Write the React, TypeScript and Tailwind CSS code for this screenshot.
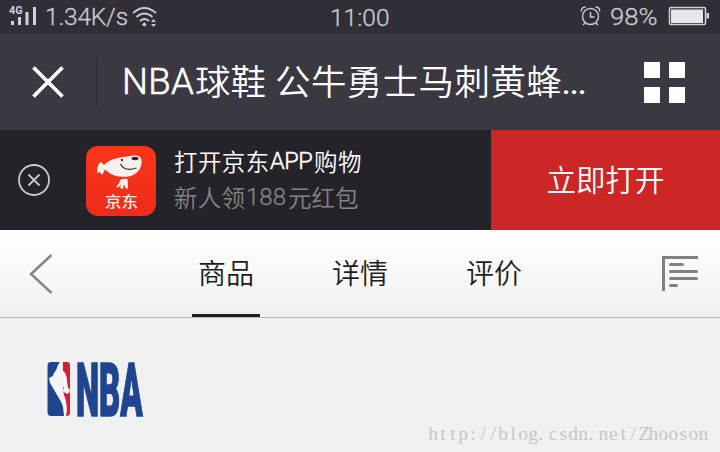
import React from 'react';

const cjk = "font-['Noto_Sans_CJK_SC',sans-serif]";

function StatusBar() {
  return (
    <div className="flex h-[34px] items-center bg-[#302e37] text-[#cbc9d0] font-['Roboto','Noto_Sans',sans-serif] [-webkit-text-stroke:0.3px_#cbc9d0]">
      <svg className="ml-2 h-[34px] w-[32px]" viewBox="8 0 32 34" fill="#d4d2d9">
        <text x="9" y="14" fontSize="10" fontWeight="700" fontFamily="Roboto, sans-serif" textLength="13.500" lengthAdjust="spacingAndGlyphs">4G</text>
        <path d="M11 21h3v4h-3zM18 17h3v8h-3zM25.500 12h3v13h-3zM33 7h3v18h-3z" />
      </svg>
      <span className="ml-[5px] w-[84px] whitespace-nowrap text-[24.5px] leading-[34px] font-light tracking-[-0.200px]">1.34K/s</span>
      <svg className="ml-[3px] h-[34px] w-[26px]" viewBox="132 0 26 34" fill="none" stroke="#cbc9d0" strokeWidth="1.7">
        <path d="M133 13q11.500-10 23 0M136.500 17q8-7 16 0M140 21q4.500-4 9 0" />
        <path d="M142 24.500l2.300-2.300 2.300 2.300-2.300 2.300zM151 22l2.500-3 2.500 3zM151 24l2.500 3 2.500-3z" fill="#cbc9d0" stroke="none" />
      </svg>
      <span className="ml-[172px] w-[70px] whitespace-nowrap pt-px text-[24.5px] leading-[34px] font-light">11:00</span>
      <svg className="ml-[180px] h-[34px] w-[22px]" viewBox="580 0 22 34" fill="none" stroke="#cbc9d0" strokeWidth="1.5">
        <circle cx="590.500" cy="16.500" r="8" />
        <path d="M581.500 11.500q-1-4 4-4.500M599.500 11.500q1-4-4-4.500M590.500 12v5h4M585 23l-2 2M596 23l2 2" />
      </svg>
      <span className="ml-[8px] w-[50px] whitespace-nowrap text-[24.5px] leading-[34px] font-light">
        <span className="inline-block origin-left scale-x-[1.050]">98%</span>
      </span>
      <svg className="ml-[8px] h-[34px] w-[42px]" viewBox="668 0 42 34">
        <rect x="669.500" y="7.500" width="36" height="17" rx="1.500" fill="none" stroke="#d4d2d9" strokeWidth="1.500" />
        <path d="M671 9.500h32v13.500h-32z" fill="#e6e5e9" />
        <path d="M706.500 13h2.500v5.500h-2.500z" fill="#d4d2d9" />
      </svg>
    </div>
  );
}

function TitleBar() {
  return (
    <div className={`flex h-[96px] items-center bg-[#3a3841] text-white ${cjk}`}>
      <svg className="ml-[32px] h-[32px] w-[32px]" viewBox="0 0 32 32" stroke="white" strokeWidth="3.800">
        <path d="M1.500 1.500l29 29M30.500 1.500l-29 29" />
      </svg>
      <div className="ml-[32px] h-[50px] w-[2px] bg-[#302e36]" />
      <div className="ml-[24px] flex w-[522px] whitespace-nowrap text-[35.500px] leading-[50px] font-[350]">
        <span className="w-[73px] pt-[2px] font-['Roboto',sans-serif] text-[36.500px] font-light tracking-[0.300px] [-webkit-text-stroke:0.6px_white]">NBA</span>
        <span className="w-[80px]">球鞋</span>
        <span className="w-[287px] tracking-[0.400px]">公牛勇士马刺黄蜂</span>
        <span className="font-['Roboto',sans-serif] font-medium text-[30px] tracking-[-0.300px] pt-[4px]">...</span>
      </div>
      <div className="grid grid-cols-2 gap-[9px]">
        <i className="size-[16px] bg-white" />
        <i className="size-[16px] bg-white" />
        <i className="size-[16px] bg-white" />
        <i className="size-[16px] bg-white" />
      </div>
    </div>
  );
}

function JdIcon() {
  return (
    <svg className="mt-[2px] ml-[36px] h-[70px] w-[70px]" viewBox="0 0 70 70">
      <defs>
        <linearGradient id="jd" x1="0" y1="0" x2="0" y2="1">
          <stop offset="0" stopColor="#fb3517" />
          <stop offset="1" stopColor="#ec2c1d" />
        </linearGradient>
      </defs>
      <rect width="70" height="70" rx="12" fill="url(#jd)" />
      <path d="M18 19C24 12 37 11 48 9.500C55 9 57 14 55 20C52 29 43 32 34 30.500C27 30 23 27 19 23.500L16 29L13.500 26L11 27C11 22 12 17.500 15 16Z" fill="#f5f2ee" />
      <path d="M34.500 18q4 8 16 4" fill="none" stroke="#43312e" strokeWidth="1.300" />
      <circle cx="36" cy="14" r="1.200" fill="#43312e" />
      <ellipse cx="49" cy="12.500" rx="3.500" ry="1.700" fill="#32231f" />
      <path d="M34 34q4-2 7.500-1L42 43l-2.500-1-1.500-4-1 5-3-1 1-4-2.500 3.500-2.500-1q4-3 4-6.500" fill="#fff3ef" />
      <text x="19" y="61" fontSize="16.500" fontWeight="500" fill="#fff3e9" fontFamily="Noto Sans CJK SC, sans-serif" textLength="33" lengthAdjust="spacingAndGlyphs" transform="matrix(1 0 0 .88 0 7)">京东</text>
    </svg>
  );
}

function AppBanner() {
  return (
    <div className={`flex h-[100px] items-center bg-[#242329] ${cjk}`}>
      <svg className="ml-[18px] size-[32px]" viewBox="0 0 32 32" fill="none" stroke="#c9c8cc" strokeWidth="1.800">
        <circle cx="16" cy="16" r="15" />
        <path d="M10.500 10.500l11 11M21.500 10.500l-11 11" />
      </svg>
      <JdIcon />
      <div className="ml-[18px] w-[317px] whitespace-nowrap pb-[2px]">
        <div className="flex text-[23.500px] leading-[36px] text-white font-[350]">
          <span className="w-[96px] tracking-[0.400px]">打开京东</span>
          <span className="w-[44px] font-['Roboto',sans-serif] text-[23.500px] font-light tracking-[-0.500px] [-webkit-text-stroke:0.5px_white]">APP</span>
          <span className="tracking-[0.400px]">购物</span>
        </div>
        <div className="flex text-[23.500px] leading-[36px] text-[#858385] font-[350]">
          <span className="w-[72px] tracking-[0.200px]">新人领</span>
          <span className="w-[42px] font-['Roboto',sans-serif] text-[24px] font-light [-webkit-text-stroke:0.3px_#858385]">188</span>
          <span>元红包</span>
        </div>
      </div>
      <div className="flex h-full flex-1 items-center justify-center bg-[#cc2726] pb-[3px] text-[29.500px] font-[350] text-white">立即打开</div>
    </div>
  );
}

function Tabs() {
  return (
    <div className={`flex h-[88px] items-center border-b border-[#b9b9b9] bg-linear-to-b from-white to-[#f0f0f0] text-[28px] font-[350] text-[#1c1c1c] ${cjk}`}>
      <svg className="ml-[29px] h-[42px] w-[25px]" viewBox="0 0 25 42" fill="none" stroke="#858585" strokeWidth="2.500">
        <path d="M22.500 2L2 21l20.500 19" />
      </svg>
      <div className="ml-[138px] flex h-full w-[68px] items-center justify-center border-b-[3px] border-[#222] whitespace-nowrap">商品</div>
      <div className="ml-[66px] w-[68px] pb-[3px] text-center">详情</div>
      <div className="ml-[66px] w-[68px] pb-[3px] text-center">评价</div>
      <svg className="ml-[134px] h-[36px] w-[37px]" viewBox="0 0 37 36" fill="none" stroke="#808080" strokeWidth="3">
        <path d="M36 1.500H1.500V35" />
        <path d="M8.500 8.500h12M8.500 15.500h26M8.500 22.500h26M8.500 29.500h6" strokeLinecap="round" />
      </svg>
    </div>
  );
}

function NbaLogo() {
  return (
    <svg className="h-[54px] w-[96px] overflow-visible" viewBox="0 0 96 54">
      <path d="M4 0H13Q7 8 10 14Q7 17 11 23Q17 36 17 54H4Q0.500 54 0.500 50V4Q0.500 0 4 0Z" fill="#20458f" />
      <path d="M16 0H20Q23 0 23 3V51Q23 54 19 54Q21 43 17 34L16 25L19 25L17 13Q15 8 16 0Z" fill="#d51f36" />
      <path d="M12 1Q15-1 16 4L15 8Q20 11 20 19L21 26Q24 27 22 31Q19 33 16 29L17 25L14 19Q12 24 15 30Q21 38 19 54H17Q17 44 13 38L3 21L2 16L6 14Q7 9 11 7Z" fill="#f5f5f7" />
      <text x="0" y="0" transform="translate(29 53.500) scale(.425 1)" textLength="157" lengthAdjust="spacingAndGlyphs" fontFamily="Roboto, sans-serif" fontWeight="900" fontSize="74" fill="#20458f" stroke="#20458f" strokeWidth="1.500">NBA</text>
    </svg>
  );
}

// Every character takes a cell of the same width; full stops sit at the cell's left.
function Watermark() {
  return (
    <div className="mb-[6px] w-[281px] whitespace-nowrap font-['Liberation_Serif',serif] text-[19.500px] leading-[24px] text-[#c6c6c6]">
      {'http://blog.csdn.net/Zhooson'.split('').map((c, i) => (
        <span key={i} className={c === '.' ? 'inline-block w-[10.030px] text-left' : 'inline-block w-[10.030px] text-center'}>{c}</span>
      ))}
    </div>
  );
}

export default function App() {
  return (
    <div className="flex h-[452px] w-[720px] flex-col overflow-hidden bg-[#f0f0f0]">
      <StatusBar />
      <TitleBar />
      <AppBanner />
      <Tabs />
      <main className="flex flex-1 items-end justify-between pr-[11px] pl-[47px]">
        <div className="mb-[36px]"><NbaLogo /></div>
        <Watermark />
      </main>
    </div>
  );
}
